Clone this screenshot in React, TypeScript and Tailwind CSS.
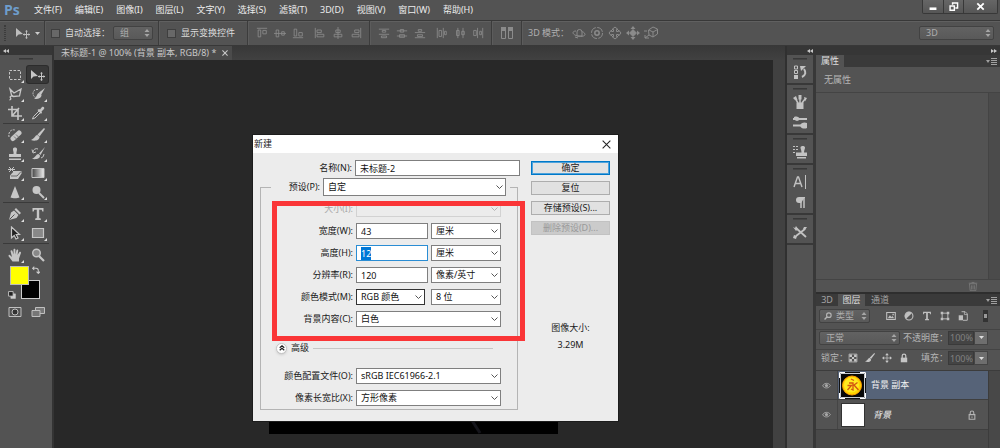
import { useEffect, useRef } from "react";
import type { ReactNode } from "react";

const menus = [
  "文件(F)",
  "编辑(E)",
  "图像(I)",
  "图层(L)",
  "文字(Y)",
  "选择(S)",
  "滤镜(T)",
  "3D(D)",
  "视图(V)",
  "窗口(W)",
  "帮助(H)",
];

function Icon({
  children,
  size = 14,
  className = "",
}: {
  children: ReactNode;
  size?: number;
  className?: string;
}) {
  return (
    <svg
      width={size}
      height={size}
      viewBox="0 0 14 14"
      fill="none"
      stroke="currentColor"
      className={`shrink-0 ${className}`}
      aria-hidden="true"
    >
      {children}
    </svg>
  );
}

const fill = { fill: "currentColor", stroke: "none" };

const moveIcon = (
  <>
    <path d="M0 2v9l2.500-2.500L7 8z" {...fill} />
    <path d="M10.500 5v7M7 8.500h7" />
    <path d="M10.500 4l1.500 1.500h-3zM10.500 13l1.500-1.500h-3zM14 8.500l-1.500 1.500v-3zM7 8.500l1.500 1.500v-3z" {...fill} />
  </>
);
const brushIcon = (
  <>
    <path d="M13 0L6.500 6.500l2 2L14 1z" {...fill} />
    <path d="M6.500 7C4 7 4 10.500 0 12c3.500 1.500 8.500.5 8.500-3z" {...fill} />
  </>
);
const typeIcon = (
  <path d="M1.500 1h11v3.500h-1.200l-.6-1.700H8.200v8.200l1.600.6V13H4.200v-1.400l1.600-.6V2.800H3.300l-.6 1.700H1.500z" {...fill} />
);
const crossIcon = (
  <>
    <path d="M7 2v10M2 7h10" />
    <path d="M7 0l2.500 3h-5zM7 14l2.500-3h-5zM0 7l3-2.500v5zM14 7l-3-2.500v5z" {...fill} />
  </>
);
const lockIcon = (
  <>
    <path d="M2.500 6.500h9V13h-9z" {...fill} />
    <path d="M4.500 7V4a2.500 2.500 0 015 0v3" strokeWidth="1.700" />
  </>
);

// toolbox, two tools per row, grouped by divider
const toolGroups: { name: string; icon: ReactNode }[][] = [
  [
    { name: "矩形选框工具", icon: <path d="M1.500 2.500h11v9h-11z" strokeDasharray="2.500 1.500" /> },
    { name: "移动工具", icon: moveIcon },
    {
      name: "多边形套索工具",
      icon: <path d="M2 2l4 4 7-4-1.500 7-6 .5L3.500 8zM5 9.500c-2-1-3.500 0-2.500 1.500s-1 2-1 2" strokeWidth="1.300" />,
    },
    {
      name: "快速选择工具",
      icon: (
        <>
          <path d="M7 2.500a4 4 0 00-5 4c0 2 1 3.500 3 4" strokeDasharray="2 1" />
          <path d="M14 1L8 5.500l2 2.500zM8 6c-2.500.5-2 4.500-5 6 4 .5 7.500-1 7.500-4z" {...fill} />
        </>
      ),
    },
    { name: "裁剪工具", icon: <path d="M4 0v10h10M0 3.500h10V14M4 10l7-8" strokeWidth="1.600" /> },
    {
      name: "吸管工具",
      icon: (
        <>
          <path d="M8.500 4.500L2.500 10.500 1.500 13l2.500-1 6-6z" />
          <path d="M6.500 4l1.500-1 1 .5 2-2.500c1.500-1 3 .5 2 2L10.500 5.500l.5 1-1 1.500z" {...fill} />
        </>
      ),
    },
  ],
  [
    {
      name: "修复画笔工具",
      icon: (
        <>
          <path d="M5 10.500L11 5" strokeWidth="5" strokeLinecap="round" />
          <path d="M6 8.500l3 3M8 6.500l3 3" stroke="#777" />
          <path d="M1 9C0 4 3 1 7 2" strokeDasharray="2 1" />
        </>
      ),
    },
    { name: "画笔工具", icon: brushIcon },
    {
      name: "仿制图章工具",
      icon: (
        <path d="M5 1.500C5.500 0 8.500 0 9 1.500S8 5 8.500 7H13v3H1V7h4.500C6 5 4.500 3 5 1.500zM1 11.500h12V13H1z" {...fill} />
      ),
    },
    {
      name: "历史记录画笔工具",
      icon: (
        <>
          <path d="M14 0L8 6.500 9.500 8zM7.500 7c-2.500 0-3 3.500-6.500 5 4.500.5 8 0 8-3.500z" {...fill} />
          <path d="M2 5a3.500 3.500 0 015-3M1 2.500L2 6l3-1M10 11a4 4 0 003-4" />
        </>
      ),
    },
    {
      name: "橡皮擦工具",
      icon: (
        <>
          <path d="M2 9.500L6 5h7.500v2.500L10 13H2z" {...fill} />
          <path d="M1 1l5 5M6 1L1 6M0 3.500h7" />
          <path d="M3 10h6l4-4.500" stroke="#666" />
        </>
      ),
    },
    {
      name: "渐变工具",
      icon: (
        <>
          <defs>
            <linearGradient id="tool-gradient">
              <stop offset="0" stopColor="#444" />
              <stop offset="1" stopColor="#eee" />
            </linearGradient>
          </defs>
          <path d="M1 2.500h12v9H1z" fill="url(#tool-gradient)" />
        </>
      ),
    },
    { name: "锐化工具", icon: <path d="M7 1l4.500 11.500c-2 1-7 1-9 0z" {...fill} /> },
    {
      name: "减淡工具",
      icon: (
        <>
          <circle cx="5.500" cy="5" r="4" {...fill} />
          <path d="M8 8l5 5" strokeWidth="2" />
        </>
      ),
    },
  ],
  [
    {
      name: "钢笔工具",
      icon: (
        <>
          <path d="M8 1l5 5-1.500 1.500L6.500 2.500zM6 3.500l4.500 4.500-2 3L1 13l2-7.500z" {...fill} />
          <path d="M1.500 12.500L6.500 7.500" stroke="#535353" />
        </>
      ),
    },
    { name: "横排文字工具", icon: typeIcon },
    {
      name: "路径选择工具",
      icon: <path d="M3.500 1v11l2.700-2.500L8 13l2-1-1.800-3.500H11.500z" fill="#222" strokeWidth="1.200" />,
    },
    {
      name: "矩形工具",
      icon: <path d="M1.500 2.500h11v9h-11z" fill="#888" strokeWidth="1.200" />,
    },
  ],
  [
    {
      name: "抓手工具",
      icon: (
        <path
          d="M4.500 13.500L.8 8.500C-.2 7 1.500 6.300 2.400 7.400L4 9 2.600 3.500c-.3-1.300 1.500-1.700 1.900-.4L5.500 6.500V1.700c0-1.400 1.900-1.400 1.900 0v4.800l1-4.200c.3-1.200 2-.8 1.800.4L9.500 7l1.700-2.700c.7-1.100 2.200-.3 1.700.9L11 10.500v3z"
          {...fill}
        />
      ),
    },
    {
      name: "缩放工具",
      icon: (
        <>
          <circle cx="5.500" cy="5" r="3.800" fill="#888" strokeWidth="1.400" />
          <path d="M8 8l5 5" strokeWidth="2.200" />
        </>
      ),
    },
  ],
];

const alignGroups: ReactNode[][] = [
  [
    <path key="a" d="M1 1.500h12M2.500 3.500h3v8h-3zM8 4h4v4H8z" />,
    <path key="b" d="M0 7.500h14M2.500 3.500h3v8h-3zM9 5.500h3v4H9z" />,
    <path key="c" d="M1 12.500h12M2.500 2.500h3v8h-3zM8 6.500h4v4H8z" />,
  ],
  [
    <path key="a" d="M1.500 1v12M3.500 3.500h5v3h-5zM3.500 8.500h8v3h-8z" />,
    <path key="b" d="M7 0v14M4.500 3.500h5v3h-5zM2.500 8.500h9v3h-9z" />,
    <path key="c" d="M12.500 1v12M5.500 3.500h5v3h-5zM2.500 8.500h8v3h-8z" />,
  ],
  [
    <path key="a" d="M1 2.500h12M5 4h4v2H5zM1 8.500h12M4 10.500h6v2H4z" />,
    <path key="b" d="M1 4.500h12M5 3h4v3H5zM1 10.500h12M4 9h6v3H4z" />,
    <path key="c" d="M1 6.500h12M5 3h4v2H5zM1 12.500h12M4 9h6v2H4z" />,
  ],
  [
    <path key="a" d="M1.500 1v12M3.500 4v7h3V4zM8.500 1v12M10 5h2v4h-2z" />,
    <path key="b" d="M4.500 1v12M3 4v6h3V4zM10.500 1v12M9 5h3v4H9z" />,
    <path key="c" d="M6.500 1v12M2 4v6h3V4zM12.500 1v12M9 5h2v4H9z" />,
  ],
];

const modeIcons: ReactNode[] = [
  <path key="a" d="M5 6a2.500 2.500 0 115 0v4H5zM4 5C0 5 0 8 4 9.500s9 1 9-1-3-3-3-3M3 11l3 1" />,
  <g key="b">
    <circle cx="7" cy="7" r="5.500" strokeDasharray="7 1.500" />
    <circle cx="7" cy="7" r="2.200" strokeWidth="1.500" />
  </g>,
  <g key="c">
    <path d="M5.500 5.500v-2h-1.500L7 1l3 2.500H8.500v2h2V4L13 7l-2.500 3V8.500h-2v2H10L7 13l-3-2.500h1.500v-2h-2V10L1 7l2.500-3v1.500z" />
  </g>,
  <g key="d">
    {crossIcon}
    <circle cx="7" cy="7" r="2.500" fill="currentColor" />
  </g>,
  <path key="e" d="M4.500 4L9 1l4.500 2v5L9 11l-4-2zM5 4l4 2 4.500-2.500M9 6v5M0 5h3M1 12l4-3M1 9v3h4" />,
];

function Sep() {
  return <span className="w-0.5 self-stretch border-l border-[#3c3c3c] bg-[#5c5c5c]" />;
}

function Spinner() {
  return (
    <svg width="6" height="8" viewBox="0 0 6 8" fill="#a5a5a5" aria-hidden="true" className="pointer-events-none absolute right-[3px]">
      <path d="M3 0l2.500 3h-5zM3 8l2.500-3h-5z" />
    </svg>
  );
}

function DarkSelect({
  label,
  value,
  width,
  pad = "pl-1.5",
  children,
}: {
  label: string;
  value: string;
  width: string;
  pad?: string;
  children?: ReactNode;
}) {
  return (
    <div className={`relative flex items-center ${width}`}>
      <select
        aria-label={label}
        className={`h-3.5 w-full appearance-none rounded-xs border border-[#424242] bg-linear-to-b from-[#626262] to-[#595959] leading-3 text-[#adadad] ${pad}`}
      >
        <option>{value}</option>
      </select>
      {children}
      <Spinner />
    </div>
  );
}

function OptionCheck({ label }: { label: string }) {
  return (
    <label className="flex items-center gap-[5px] whitespace-nowrap">
      <input
        type="checkbox"
        className="size-[9px] appearance-none border border-[#3f3f3f] bg-[#686868]"
      />
      {label}
    </label>
  );
}

function MenuBar() {
  return (
    <header className="flex h-5 items-center">
      <span className="w-[29px] pl-1 font-['Open_Sans'] text-[14px] leading-5 font-bold text-[#6e9dcc]">
        Ps
      </span>
      <nav className="flex w-[444px] justify-between pl-[5px]">
        {menus.map((item) => (
          <button key={item} type="button" className="whitespace-nowrap text-[#ececec]">
            {item}
          </button>
        ))}
      </nav>
      <div className="mr-[2px] ml-auto flex h-3.5 self-start rounded-b-xs border border-t-0 border-[#383838] bg-linear-to-b from-[#666] to-[#565656] text-white">
        <button type="button" aria-label="最小化" className="flex w-[21px] items-center justify-center border-r border-[#383838]">
          <Icon size={12}>
            <path d="M3 9h8" strokeWidth="3" />
          </Icon>
        </button>
        <button type="button" aria-label="还原" className="flex w-5 items-center justify-center border-r border-[#383838]">
          <Icon size={10}>
            <path d="M5 4V1.500h7v7H9M1.500 5.500h6v6h-6z" strokeWidth="2" />
          </Icon>
        </button>
        <button type="button" aria-label="关闭" className="flex w-[33px] items-center justify-center">
          <Icon size={9}>
            <path d="M2 2l10 10M12 2L2 12" strokeWidth="2.800" />
          </Icon>
        </button>
      </div>
    </header>
  );
}

function OptionsBar() {
  return (
    <div className="flex h-[26px] items-center border-y border-[#383838] shadow-[inset_0_1px_0_#606060]">
      <span className="ml-1 h-4 w-0.5 border-x border-dotted border-[#3c3c3c]" />
      <Icon className="ml-2.5 text-[#bdbdbd]">{moveIcon}</Icon>
      <svg width="5" height="3" className="mr-1 ml-[5px] fill-[#ccc]" aria-hidden="true">
        <path d="M0 0h5L2.500 3z" />
      </svg>
      <Sep />
      <div className="flex items-center gap-[3px] px-[5px]">
        <OptionCheck label="自动选择：" />
        <DarkSelect label="自动选择" value="组" width="w-10" />
      </div>
      <Sep />
      <div className="pr-3 pl-[7px]">
        <OptionCheck label="显示变换控件" />
      </div>
      <Sep />
      <div className="flex gap-1 px-1 text-[#8b8b8b]">
        {alignGroups.slice(0, 2).map((group, i) => (
          <div key={i} className="flex">
            {group.map((icon, j) => (
              <button key={j} type="button" aria-label="对齐" className="flex w-[18px] justify-center">
                <Icon size={12}>{icon}</Icon>
              </button>
            ))}
          </div>
        ))}
      </div>
      <Sep />
      <div className="flex gap-1 px-1 text-[#8b8b8b]">
        {alignGroups.slice(2).map((group, i) => (
          <div key={i} className="flex">
            {group.map((icon, j) => (
              <button key={j} type="button" aria-label="分布" className="flex w-[18px] justify-center">
                <Icon size={12}>{icon}</Icon>
              </button>
            ))}
          </div>
        ))}
      </div>
      <Sep />
      <button type="button" aria-label="自动对齐图层" className="mx-[7px] text-[#8b8b8b]">
        <Icon>
          <path d="M1.500 1.500h4v11h-4zM8.500 1.500h4v11h-4z" />
          <path d="M1 1h5v4H1zM8 1h5v4H8z" {...fill} />
        </Icon>
      </button>
      <Sep />
      <span className="w-[47px] pl-[5px] whitespace-nowrap text-[#b0b0b0]">3D 模式：</span>
      <div className="flex text-[#8b8b8b]">
        {modeIcons.map((icon, i) => (
          <button key={i} type="button" aria-label="3D 模式" className="flex w-[18px] justify-center">
            <Icon>{icon}</Icon>
          </button>
        ))}
      </div>
      <div className="mr-1.5 ml-auto">
        <DarkSelect label="工作区" value="3D" width="w-[75px]" />
      </div>
    </div>
  );
}

function Grip() {
  return <span className="mx-auto block h-0.5 w-3.5 border-t border-[#383838] bg-[#444]" />;
}

function Toolbox() {
  return (
    <aside className="flex w-[54px] shrink-0 flex-col border-r-2 border-[#343434] bg-[#535353]">
      <div className="flex h-[9px] items-center bg-[#363636] pl-[3px]">
        <DoubleArrow />
      </div>
      <div className="pt-[3px] pb-1">
        <Grip />
      </div>
      {toolGroups.map((group, i) => (
        <div
          key={i}
          className={`mx-[3px] grid grid-cols-2 py-px ${i ? "border-t border-[#3a3a3a]" : ""}`}
        >
          {group.map((tool) => (
            <button
              key={tool.name}
              type="button"
              aria-label={tool.name}
              className={`relative m-px flex h-[17px] items-center justify-center rounded-xs text-[#c6c6c6] ${
                tool.name === "移动工具" ? "bg-[#383838] shadow-[0_0_0_1px_#2c2c2c]" : ""
              }`}
            >
              <Icon>{tool.icon}</Icon>
              {tool.name !== "移动工具" && tool.name !== "缩放工具" && (
                <svg width="3" height="3" className="absolute right-px bottom-0 fill-[#ddd]" aria-hidden="true">
                  <path d="M3 0v3H0z" />
                </svg>
              )}
            </button>
          ))}
        </div>
      ))}
      {/* foreground / background colours */}
      <div className="relative mt-px ml-2 h-[33px] w-8">
        <button type="button" aria-label="背景色" className="absolute right-0 bottom-0 size-[19px] border border-[#ccc] bg-black" />
        <button type="button" aria-label="前景色" className="absolute top-0 left-0.5 size-[19px] border border-[#bbb] bg-[#ffff00]" />
        <button type="button" aria-label="切换颜色" className="absolute top-0 right-0 text-[#ccc]">
          <Icon size={8}>
            <path d="M1 4h6q4 0 4 4v5M4 1L1 4l3 3M8 10l3 3 3-3" strokeWidth="1.800" />
          </Icon>
        </button>
        <button type="button" aria-label="默认颜色" className="absolute bottom-0 left-0 text-[#ccc]">
          <Icon size={8}>
            <path d="M5 5h8v8H5z" fill="#ccc" />
            <path d="M1 1h8v8H1z" fill="#222" strokeWidth="1.500" />
          </Icon>
        </button>
      </div>
      <div className="mt-0.5 grid grid-cols-2 justify-items-center px-[3px] pt-1 text-[#c0c0c0]">
        <button type="button" aria-label="快速蒙版">
          <Icon>
            <path d="M1 2.500h12v9H1z" />
            <circle cx="7" cy="7" r="3" fill="#333" />
          </Icon>
        </button>
        <button type="button" aria-label="屏幕模式">
          <Icon>
            <path d="M4.500 2.500h9v6h-9z" fill="#777" />
            <path d="M1 5.500h8v6H1z" fill="#777" />
          </Icon>
        </button>
      </div>
    </aside>
  );
}

function DoubleArrow({ right = false }: { right?: boolean }) {
  return (
    <svg width="6" height="4" viewBox="0 0 6 4" fill="#c8c8c8" aria-hidden="true" className={right ? "rotate-180" : ""}>
      <path d="M3 0v4L0 2zM6 0v4L3 2z" />
    </svg>
  );
}

const field =
  "h-4 rounded-none border border-[#7f7f7f] bg-white pl-1 text-[9px] leading-[14px] text-[#111] outline-none";

function Select({
  id,
  value,
  width,
  tone = "border-[#7f7f7f]",
  height = "h-4",
  label,
  disabled = false,
}: {
  id?: string;
  value: string;
  width: string;
  tone?: string;
  height?: string;
  label?: string;
  disabled?: boolean;
}) {
  return (
    <div className={`relative flex items-center ${width}`}>
      <select
        id={id}
        aria-label={label}
        disabled={disabled}
        className={`w-full appearance-none rounded-none border pl-1 text-[9px] leading-[14px] text-[#111] outline-none ${height} ${tone} ${
          disabled ? "bg-[#ececec]" : "bg-white"
        }`}
      >
        <option>{value}</option>
      </select>
      <svg
        width="7"
        height="4"
        viewBox="0 0 7 4"
        fill="none"
        stroke={disabled ? "#b5b5b5" : "#555"}
        aria-hidden="true"
        className="pointer-events-none absolute right-[3px]"
      >
        <path d="M.5.500l3 3 3-3" />
      </svg>
    </div>
  );
}

function FormRow({ id, label, muted, children }: { id: string; label: string; muted?: boolean; children: ReactNode }) {
  return (
    <div className="flex h-4 items-center gap-[3px]">
      <label
        htmlFor={id}
        className={`w-[92px] text-right whitespace-nowrap ${muted ? "text-[#aaa]" : ""}`}
      >
        {label}
      </label>
      {children}
    </div>
  );
}

function NewDocumentDialog() {
  const heightRef = useRef<HTMLInputElement>(null);

  useEffect(() => {
    heightRef.current?.focus();
    heightRef.current?.select();
  }, []);

  const button =
    "h-3.5 w-full border text-center leading-3 whitespace-nowrap";

  return (
    <form
      role="dialog"
      aria-label="新建"
      onSubmit={(e) => e.preventDefault()}
      className="absolute top-[75px] left-[199px] w-[365px] bg-[#ececec] text-[9px] text-[#1a1a1a] shadow-[0_0_0_1px_#1c1c1c]"
    >
      <div className="flex h-[18px] items-center justify-between bg-white pr-[7px] pl-px">
        <h2>新建</h2>
        <button type="button" aria-label="关闭" className="text-[#222]">
          <Icon size={9}>
            <path d="M1 1l12 12M13 1L1 13" strokeWidth="1.600" />
          </Icon>
        </button>
      </div>
      <div className="flex gap-[11px] pt-[7px] pr-2 pb-[11px] pl-[7px]">
        <div className="w-[260px]">
          <FormRow id="doc-name" label="名称(N):">
            <input id="doc-name" defaultValue="未标题-2" className={`${field} min-w-0 flex-1`} />
          </FormRow>
          <fieldset className="mt-0.5 mr-0.5 border border-[#b4b4b4] pb-[3px]">
            <legend className="ml-2.5 flex items-center gap-[3px] pr-1">
              <label htmlFor="doc-preset" className="w-[49px] text-right whitespace-nowrap">
                预设(P):
              </label>
              <Select id="doc-preset" value="自定" width="w-[183px]" height="h-[18px]" />
            </legend>
            <div className="flex flex-col gap-1.5 pt-[5px]">
              <FormRow id="doc-size" label="大小(I):" muted>
                <Select id="doc-size" value="" width="w-[145px]" tone="border-[#d2d2d2]" disabled />
              </FormRow>
              <FormRow id="doc-width" label="宽度(W):">
                <input id="doc-width" defaultValue="43" className={`${field} w-[72px]`} />
                <Select label="宽度单位" value="厘米" width="w-[70px]" />
              </FormRow>
              <FormRow id="doc-height" label="高度(H):">
                <input
                  id="doc-height"
                  ref={heightRef}
                  defaultValue="12"
                  className="h-4 w-[72px] border border-[#2a8dd4] bg-white pl-1 leading-[14px] outline-none selection:bg-[#0078d7] selection:text-white"
                />
                <Select label="高度单位" value="厘米" width="w-[70px]" />
              </FormRow>
              <FormRow id="doc-resolution" label="分辨率(R):">
                <input id="doc-resolution" defaultValue="120" className={`${field} w-[72px]`} />
                <Select label="分辨率单位" value="像素/英寸" width="w-[70px]" />
              </FormRow>
              <FormRow id="doc-mode" label="颜色模式(M):">
                <div className="flex w-[72px]">
                  <Select id="doc-mode" value="RGB 颜色" width="w-[69px]" tone="border-[#333]" />
                </div>
                <Select label="位深度" value="8 位" width="w-[70px]" />
              </FormRow>
              <FormRow id="doc-background" label="背景内容(C):">
                <Select id="doc-background" value="白色" width="w-[145px]" />
              </FormRow>
            </div>
            <div className="mt-3.5 mb-[13px] ml-[15px] flex h-3.5 items-center">
              <button type="button" aria-label="收起高级" className="flex size-[11px] items-center justify-center rounded-full border border-[#c4c4c4] bg-white shadow-sm">
                <Icon size={8}>
                  <path d="M3 6.500L7 3l4 3.500M3 11l4-3.500L11 11" strokeWidth="2" />
                </Icon>
              </button>
              <span className="mr-1 ml-1">高级</span>
              <span className="mr-6 h-px flex-1 bg-[#c6c6c6]" />
            </div>
            <div className="flex flex-col gap-1.5">
              <FormRow id="doc-profile" label="颜色配置文件(O):">
                <Select id="doc-profile" value="sRGB IEC61966-2.1" width="w-[145px]" />
              </FormRow>
              <FormRow id="doc-aspect" label="像素长宽比(X):">
                <Select id="doc-aspect" value="方形像素" width="w-[145px]" />
              </FormRow>
            </div>
          </fieldset>
        </div>
        <div className="flex w-[79px] flex-col gap-1.5 pt-px">
          <button type="submit" className={`${button} border-[#0078c8] bg-[#e3e3e3] shadow-[inset_0_0_0_1px_#4ea3dc]`}>
            确定
          </button>
          <button type="button" className={`${button} border-[#adadad] bg-[#e1e1e1]`}>
            复位
          </button>
          <button type="button" className={`${button} border-[#adadad] bg-[#e1e1e1]`}>
            存储预设(S)...
          </button>
          <button type="button" disabled className={`${button} border-[#c2c2c2] bg-[#cbcbcb] text-[#999]`}>
            删除预设(D)...
          </button>
          <div className="mt-[78px] text-center leading-[17px]">
            <p>图像大小:</p>
            <p>3.29M</p>
          </div>
        </div>
      </div>
      {/* highlight frame over the size fields */}
      <div className="pointer-events-none absolute top-[66px] left-[19px] h-[140px] w-[253px] border-5 border-[#fa3537]" />
    </form>
  );
}

function Workspace() {
  return (
    <main className="flex min-w-0 flex-1 flex-col">
      <div className="flex h-3.5 bg-linear-to-b from-[#383838] to-[#414141]">
        <div className="flex h-full items-center gap-1.5 bg-[#4b4b4b] pr-1 pl-[7px] whitespace-nowrap text-[#c8c8c8]">
          <span>未标题-1 @ 100% (背景 副本, RGB/8) *</span>
          <button type="button" aria-label="关闭文档">
            <Icon size={6}>
              <path d="M1 1l12 12M13 1L1 13" strokeWidth="2.500" />
            </Icon>
          </button>
        </div>
      </div>
      <div className="flex flex-1">
        <div className="relative flex-1 bg-[#282828]">
          <div className="absolute top-[80px] left-[215px] h-[294px] w-[289px] bg-black">
            <svg width="14" height="16" className="absolute right-[76px] bottom-0" aria-hidden="true">
              <path d="M3 1l9 14" stroke="#15151b" strokeWidth="3" />
            </svg>
          </div>
          <NewDocumentDialog />
        </div>
        <div className="w-3 bg-[#414141]" />
      </div>
    </main>
  );
}

const dockGroups: ReactNode[][] = [
  [
    <g key="history">
      <path d="M1.500 1h3v3h-3zM1.500 5.500h3v3h-3z" />
      <path d="M1 10h4v4H1z" {...fill} />
      <path d="M9 12c4-2 4-5 2-8" strokeWidth="2" />
      <path d="M7 1h6l-5 5z" {...fill} />
    </g>,
  ],
  [
    <g key="brushes">
      <path d="M3.500 7.500h7V14h-7z" {...fill} />
      <path d="M5 8L2 3M7 8V2M9 8l3-4" strokeWidth="1.500" />
      <path d="M0 3l3-2 1.500 4H2zM5.500 0h3v4.500h-3zM11 2l3 1-2 3.500z" {...fill} />
    </g>,
    <g key="presets">
      <path d="M0 4h14M0 10.500h14" strokeWidth="1.800" />
      <path d="M1 2c3-1 5 0 6 2-2 2.500-4 2.500-6 0zM7 10.500c1-3.500 5-3.500 7-2.500v5c-2 1-6 1-7-2.500z" {...fill} />
    </g>,
  ],
  [
    <g key="clone">
      <path d="M0 1.500h5M0 4.500h5M0 7.500h3" strokeDasharray="2 1" />
      <path d="M7.500 2.500c0-2 4.500-2 4.500 0 0 2-1 2.500-1 5h3v3.500H3V7.500h5.500c0-2.500-1-3-1-5zM4 12h9v1.500H4z" {...fill} />
    </g>,
  ],
  [
    <g key="character">
      <path d="M1 12L4.500 2h1L9 12M2.500 8.500h5" strokeWidth="1.400" />
      <path d="M12.500 0v14" />
    </g>,
    <g key="paragraph">
      <path d="M8 8H6a3 3 0 010-6h6" {...fill} />
      <path d="M8 2v11M11 2v11" strokeWidth="1.500" />
      <path d="M6 2.500h6" />
    </g>,
  ],
  [
    <g key="tools">
      <path d="M3 3l10 9M12 4l-9 7" strokeWidth="1.800" />
      <path d="M0 2l2 1 1-2 2 3-2 2zM14 2l-2 3-2-1 1-2zM1 10l3 1-1 3-3-1z" {...fill} />
    </g>,
  ],
];

function Dock() {
  return (
    <aside className="flex w-[26px] shrink-0 flex-col bg-[#535353] text-[#c2c2c2]">
      {dockGroups.map((group, i) => (
        <div key={i} className="border-b-2 border-[#383838] pt-[3px] pb-px">
          <Grip />
          <div className="flex flex-col items-center pt-0.5">
            {group.map((icon, j) => (
              <button key={j} type="button" aria-label="面板" className="flex h-5 items-center">
                <Icon>{icon}</Icon>
              </button>
            ))}
          </div>
        </div>
      ))}
    </aside>
  );
}

function PanelMenu() {
  return (
    <button type="button" aria-label="面板菜单" className="mr-[3px] ml-auto text-[#a0a0a0]">
      <svg width="11" height="7" viewBox="0 0 11 7" fill="currentColor" aria-hidden="true">
        <path d="M0 2h4L2 5zM5 0h6v1H5zM5 2h6v1H5zM5 4h6v1H5zM5 6h6v1H5z" />
      </svg>
    </button>
  );
}

function PercentField({ id, label }: { id: string; label: string }) {
  return (
    <div className="ml-auto flex items-center">
      <label htmlFor={id} className="whitespace-nowrap text-[#b5b5b5]">
        {label}
      </label>
      <input
        id={id}
        defaultValue="100%"
        className="h-3.5 w-[26px] border border-[#3a3a3a] bg-[#444] pl-px leading-3 text-[#808080]"
      />
      <button type="button" aria-label="展开" className="flex h-3.5 w-3.5 items-center justify-center border border-[#444] bg-[#6e6e6e]">
        <svg width="5" height="3" className="fill-[#ddd]" aria-hidden="true">
          <path d="M0 0h5L2.500 3z" />
        </svg>
      </button>
    </div>
  );
}

const filterIcons: ReactNode[] = [
  <g key="pixel">
    <path d="M1 2h12v10H1z" strokeWidth="1.500" />
    <path d="M2.500 10l3-4 2 2.500L9 7l2.500 3zM9 4h2v2H9z" {...fill} />
  </g>,
  <g key="adjust">
    <circle cx="7" cy="7" r="5.500" strokeWidth="1.500" />
    <path d="M3 11A5.500 5.500 0 1111 3z" {...fill} />
  </g>,
  <g key="type">{typeIcon}</g>,
  <g key="shape">
    <path d="M3 3h8v8H3z" strokeWidth="1.300" />
    <path d="M1 1h3.500v3.500H1zM9.500 1H13v3.500H9.500zM1 9.500h3.500V13H1zM9.500 9.500H13V13H9.500z" {...fill} />
  </g>,
  <g key="smart">
    <path d="M5 1h5l3 3v9H7" strokeWidth="1.300" />
    <path d="M1 6h6v7H1z" {...fill} />
    <path d="M9 1v4h4" />
  </g>,
];

const lockIcons: ReactNode[] = [
  <g key="pixels">
    <path d="M1.500 1.500h11v11h-11z" />
    <path d="M2 2h3.500v3.500H2zM8.500 2H12v3.500H8.500zM5.500 5.500h3v3h-3zM2 8.500h3.500V12H2zM8.500 8.500H12V12H8.500z" {...fill} />
  </g>,
  <g key="brush">{brushIcon}</g>,
  <g key="position">{crossIcon}</g>,
  <g key="all">{lockIcon}</g>,
];

function Eye() {
  return (
    <button type="button" aria-label="切换可见性" className="flex w-[22px] items-center justify-center self-stretch border-r border-[#454545] text-[#a9a9a9]">
      <Icon size={9}>
        <path d="M1 7.500C3 3 10 2 13 7c-3 5-9 5-12 .5z" strokeWidth="1.500" />
        <circle cx="7" cy="7" r="2.500" {...fill} />
      </Icon>
    </button>
  );
}

function Panels() {
  return (
    <aside className="flex w-[184px] shrink-0 flex-col bg-[#535353] text-[#b5b5b5]">
      <div className="flex h-3 items-center bg-[#3a3a3a]">
        <h3 className="h-full bg-[#535353] px-[5px] leading-3 text-[#ddd]">属性</h3>
        <PanelMenu />
      </div>
      <p className="h-[26px] border-b border-[#444] pl-2 leading-[26px]">无属性</p>
      <div className="flex h-[186px]">
        <div className="flex-1" />
        <div className="w-3 border-l border-[#444] bg-[#4b4b4b]" />
      </div>
      <div className="flex h-[13px] items-center justify-end border-t border-[#444] pr-[22px] text-[#808080]">
        <Icon size={10}>
          <path d="M2 4h10l-1 9.500H3zM5 6v6M7 6v6M9 6v6M1 3h12M5 2h4" />
        </Icon>
      </div>
      <div className="flex h-[14px] items-center border-t-2 border-[#2e2e2e] bg-[#3a3a3a] text-[#a5a5a5]">
        <button type="button" className="h-full w-[22px] leading-3">3D</button>
        <button type="button" className="h-full w-[27px] bg-[#535353] leading-3 text-[#ddd]">图层</button>
        <button type="button" className="h-full w-[30px] leading-3">通道</button>
        <PanelMenu />
      </div>
      <div className="flex h-6 items-center border-b border-[#444] pb-1 pl-[3px]">
        <DarkSelect label="类型" value="类型" width="w-[51px]" pad="pl-4">
          <Icon size={8} className="pointer-events-none absolute left-[5px]">
            <circle cx="8.500" cy="5.500" r="4" strokeWidth="2" />
            <path d="M5.500 8.500L1 13" strokeWidth="2.500" />
          </Icon>
        </DarkSelect>
        <div className="ml-3 flex text-[#c0c0c0]">
          {filterIcons.map((icon, i) => (
            <button key={i} type="button" aria-label="过滤" className="flex w-[18px] justify-center">
              <Icon size={10}>{icon}</Icon>
            </button>
          ))}
        </div>
        <button type="button" aria-label="打开图层过滤" className="mr-3 ml-auto h-3 w-[5px] border border-[#333] bg-[#333]">
          <span className="block h-1 bg-[#999]" />
        </button>
      </div>
      <div className="flex h-5 items-center border-b border-[#444] pr-3 pb-1 pl-[3px]">
        <DarkSelect label="混合模式" value="正常" width="w-[81px]" />
        <PercentField id="opacity" label="不透明度：" />
      </div>
      <div className="flex h-5 items-center pr-3 pb-1 pl-[5px]">
        <span className="w-[23px] whitespace-nowrap">锁定：</span>
        <div className="flex text-[#c6c6c6]">
          {lockIcons.map((icon, i) => (
            <button key={i} type="button" aria-label="锁定" className="flex w-[17px] justify-center">
              <Icon size={10}>{icon}</Icon>
            </button>
          ))}
        </div>
        <PercentField id="fill" label="填充：" />
      </div>
      <div className="flex flex-1 border-t border-[#3c3c3c] bg-[#494949]">
        <ul className="flex-1">
          <li className="flex h-[29px] items-center border-b border-[#3f3f3f] bg-[#535353]">
            <Eye />
            <div className="flex flex-1 items-center gap-[5px] self-stretch bg-[#566378] pl-px">
              <svg width="27" height="27" viewBox="0 0 27 27" aria-hidden="true">
                <path d="M0 0h27v27H0z" fill="#111" />
                <path d="M1.500 1.500h24v24h-24z" fill="#080808" stroke="#c8ccd2" />
                <path d="M.5 6V.5H6M21 .5h5.500V6M26.500 21v5.500H21M6 26.500H.5V21" stroke="#fff" fill="none" />
                <circle cx="13" cy="13.500" r="9.500" fill="#ffd400" stroke="#ff9c00" />
                <circle cx="12.500" cy="13" r="7.500" fill="#ffe920" />
                <path d="M12 7l3 1.500M10 11h4v7l-2-1M8.500 13.500h4l-4 4.500M18.500 10.500L15 13l4.500 5" stroke="#d35412" strokeWidth="1.300" fill="none" />
              </svg>
              <span className="text-[#f0f0f0]">背景 副本</span>
            </div>
          </li>
          <li className="flex h-[30px] items-center border-b border-[#3f3f3f] bg-[#535353]">
            <Eye />
            <div className="ml-[3px] size-6 border border-[#333] bg-white" />
            <span className="ml-2 text-[#e8e8e8] italic">背景</span>
            <Icon size={10} className="mr-[11px] ml-auto text-[#b5b5b5]">
              <path d="M3 6.500h8V13H3zM4.500 6V4a2.500 2.500 0 015 0v2M7 9v2" strokeWidth="1.500" />
            </Icon>
          </li>
        </ul>
        <div className="w-3 border-l border-[#3c3c3c] bg-[#484848]" />
      </div>
    </aside>
  );
}

export default function App() {
  return (
    <div className="flex min-h-screen flex-col overflow-hidden bg-[#535353] font-['Noto_Sans','Noto_Sans_CJK_SC',sans-serif] text-[9px] leading-3 text-[#dcdcdc]">
      <MenuBar />
      <OptionsBar />
      <div className="flex flex-1">
        <Toolbox />
        <Workspace />
        <div className="flex shrink-0 flex-col border-l-2 border-[#303030] bg-[#383838]">
          <div className="flex h-[9px] items-center justify-between bg-[#363636] pr-[3px] pl-5">
            <DoubleArrow />
            <DoubleArrow right />
          </div>
          <div className="flex flex-1 gap-[3px]">
            <Dock />
            <Panels />
          </div>
        </div>
      </div>
    </div>
  );
}
